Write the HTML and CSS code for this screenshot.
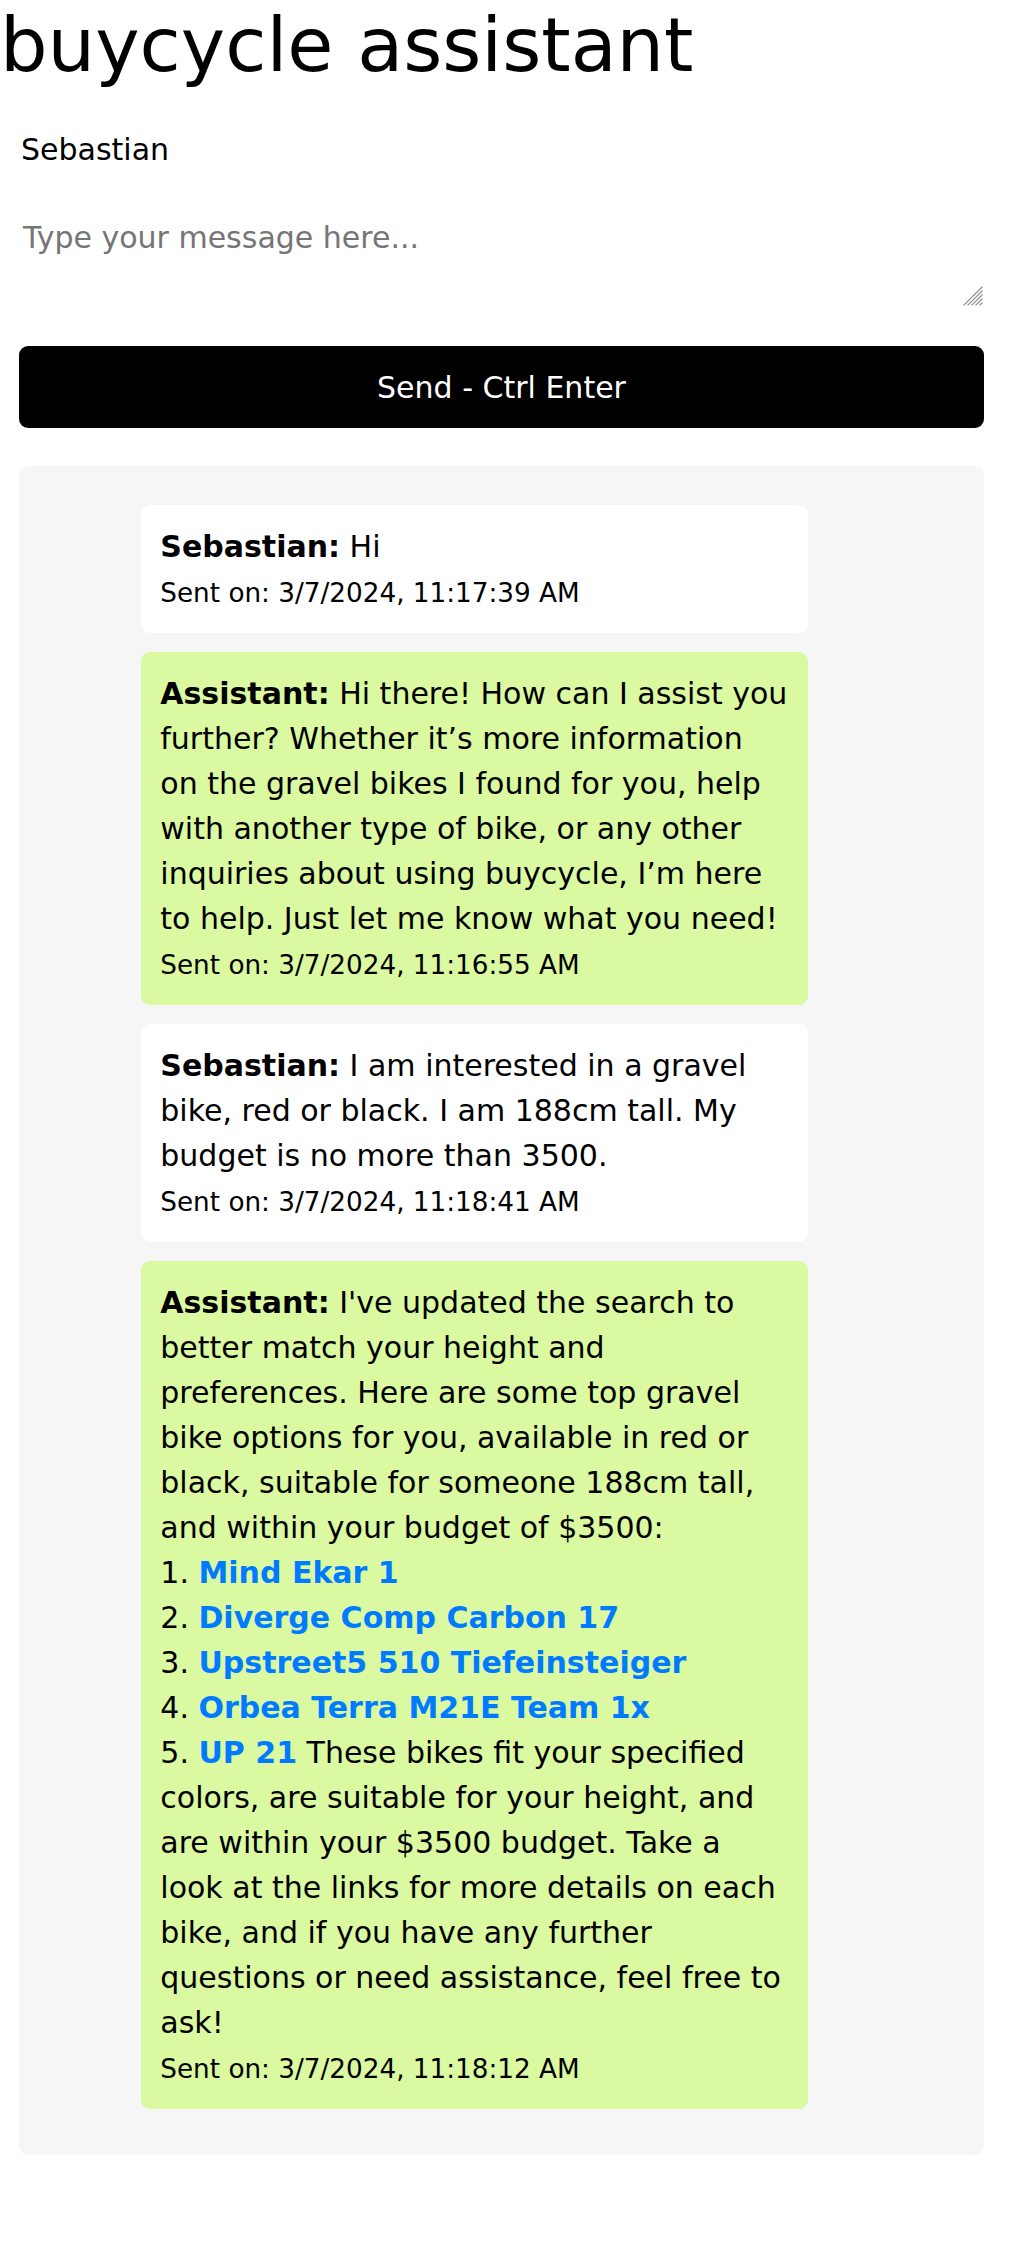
FILE: index.html
```html
<!DOCTYPE html>
<html lang="en">
<head>
<meta charset="utf-8">
<title>buycycle assistant</title>
<link rel="stylesheet" href="styles.css">
</head>
<body>
<h1 class="title">buycycle assistant</h1>
<div class="form">
  <input class="name" type="text" value="Sebastian">
  <div class="message-wrap">
    <textarea class="message" placeholder="Type your message here..."></textarea>
    <svg class="grip" width="20" height="20" viewBox="0 0 20 20" aria-hidden="true">
      <g stroke="#8a8a8a" stroke-width="1.2" stroke-linecap="square">
        <line x1="19" y1="1" x2="1" y2="19"/>
        <line x1="19" y1="5" x2="5" y2="19"/>
        <line x1="19" y1="9" x2="9" y2="19"/>
        <line x1="19" y1="13" x2="13" y2="19"/>
        <line x1="19" y1="17" x2="17" y2="19"/>
      </g>
    </svg>
  </div>
  <button class="send" type="button">Send - Ctrl Enter</button>
  <div class="chat">
    <div class="msg user">
      <p class="text"><strong>Sebastian:</strong> Hi</p>
      <p class="time">Sent on: 3/7/2024, 11:17:39 AM</p>
    </div>
    <div class="msg bot">
      <p class="text"><strong>Assistant:</strong> Hi there! How can I assist you further? Whether it’s more information on the gravel bikes I found for you, help with another type of bike, or any other inquiries about using buycycle, I’m here to help. Just let me know what you need!</p>
      <p class="time">Sent on: 3/7/2024, 11:16:55 AM</p>
    </div>
    <div class="msg user">
      <p class="text"><strong>Sebastian:</strong> I am interested in a gravel bike, red or black. I am 188cm tall. My budget is no more than 3500.</p>
      <p class="time">Sent on: 3/7/2024, 11:18:41 AM</p>
    </div>
    <div class="msg bot">
      <p class="text"><strong>Assistant:</strong> I've updated the search to better match your height and preferences. Here are some top gravel bike options for you, available in red or black, suitable for someone 188cm tall, and within your budget of $3500:<br>1. <a class="link" href="#">Mind Ekar 1</a><br>2. <a class="link" href="#">Diverge Comp Carbon 17</a><br>3. <a class="link" href="#">Upstreet5 510 Tiefeinsteiger</a><br>4. <a class="link" href="#">Orbea Terra M21E Team 1x</a><br>5. <a class="link" href="#">UP 21</a> These bikes fit your specified colors, are suitable for your height, and are within your $3500 budget. Take a look at the links for more details on each bike, and if you have any further questions or need assistance, feel free to ask!</p>
      <p class="time">Sent on: 3/7/2024, 11:18:12 AM</p>
    </div>
  </div>
</div>
</body>
</html>
```
FILE: styles.css
```css
html, body {
  margin: 0;
  padding: 0;
  background: #ffffff;
}

body {
  font-family: "DejaVu Sans", sans-serif;
  color: #000000;
}

.title {
  margin: 0;
  font-size: 75px;
  font-weight: normal;
  line-height: 90px;
  color: #000000;
}

.form {
  padding: 0 40px 0 19px;
  display: flex;
  flex-direction: column;
}

.name {
  display: block;
  box-sizing: border-box;
  width: 100%;
  height: 40px;
  margin: 40px 0 0;
  padding: 0 2px;
  border: none;
  outline: none;
  background: transparent;
  font-family: "DejaVu Sans", sans-serif;
  font-size: 30px;
  line-height: 40px;
  color: #000000;
}

.message-wrap {
  position: relative;
  margin-top: 46px;
}

.message {
  display: block;
  box-sizing: border-box;
  width: 100%;
  height: 92px;
  margin: 0;
  padding: 4px;
  border: none;
  outline: none;
  resize: none;
  background: transparent;
  font-family: "DejaVu Sans", sans-serif;
  font-size: 30px;
  color: #000000;
}

.message::placeholder {
  color: #757575;
}

.grip {
  position: absolute;
  right: 1px;
  bottom: 2px;
  display: block;
}

.send {
  display: block;
  width: 100%;
  height: 82px;
  margin: 38px 0 0;
  padding: 0;
  border: none;
  border-radius: 9px;
  background: #000000;
  color: #ffffff;
  font-family: "DejaVu Sans", sans-serif;
  font-size: 30px;
  cursor: pointer;
}

.chat {
  margin-top: 38px;
  padding: 39px 0 27px;
  background: #f6f6f6;
  border-radius: 9px;
}

.msg {
  box-sizing: border-box;
  width: 667px;
  margin: 0 0 19px 122px;
  padding: 19.3px;
  border-radius: 9px;
}

.user {
  background: #ffffff;
}

.bot {
  background: #daf9a0;
}

.text {
  margin: 0;
  font-size: 30px;
  line-height: 45px;
}

.time {
  margin: 5px 0 0;
  font-size: 26.25px;
  line-height: 39.4px;
}

.link {
  color: #007bff;
  font-weight: bold;
  text-decoration: none;
}
```
